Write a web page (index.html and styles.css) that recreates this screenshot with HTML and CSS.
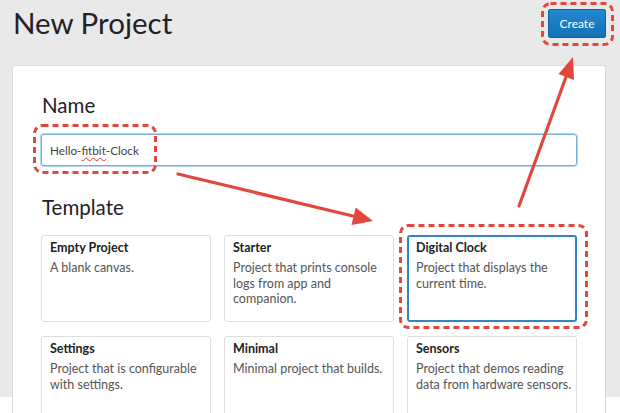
FILE: index.html
```html
<!DOCTYPE html>
<html lang="en">
<head>
<meta charset="utf-8">
<title>New Project</title>
<link rel="stylesheet" href="styles.css">
</head>
<body>
<div class="page">
  <header class="header">
    <h1 class="title">New Project</h1>
    <button class="create-btn" type="button">Create</button>
  </header>
  <main class="panel">
    <h2 class="label">Name</h2>
    <div class="name-input">Hello-<span class="misspelled">fitbit</span>-Clock</div>
    <h2 class="label template-label">Template</h2>
    <div class="templates">
      <div class="card">
        <div class="card-title">Empty Project</div>
        <div class="card-desc">A blank canvas.</div>
      </div>
      <div class="card">
        <div class="card-title">Starter</div>
        <div class="card-desc">Project that prints console logs from app and companion.</div>
      </div>
      <div class="card selected">
        <div class="card-title">Digital Clock</div>
        <div class="card-desc">Project that displays the current time.</div>
      </div>
      <div class="card">
        <div class="card-title">Settings</div>
        <div class="card-desc">Project that is configurable with settings.</div>
      </div>
      <div class="card">
        <div class="card-title">Minimal</div>
        <div class="card-desc">Minimal project that builds.</div>
      </div>
      <div class="card">
        <div class="card-title">Sensors</div>
        <div class="card-desc">Project that demos reading data from hardware sensors.</div>
      </div>
    </div>
  </main>
</div>
<svg class="annotations" width="620" height="413" viewBox="0 0 620 413" aria-hidden="true">
  <g fill="none" stroke="#e2473d" stroke-width="3" stroke-dasharray="6 4">
    <rect x="542.5" y="3.5" width="70" height="41" rx="8"/>
    <rect x="34.5" y="125.5" width="121" height="47" rx="8"/>
    <rect x="400.5" y="225.5" width="186" height="102" rx="8"/>
  </g>
  <g stroke="#e2473d" stroke-width="3.2" stroke-linecap="round">
    <line x1="178" y1="174" x2="355" y2="216.5"/>
    <line x1="519" y1="206" x2="566" y2="77"/>
  </g>
  <g fill="#e2473d">
    <polygon points="373,221 351.5,225 355.7,207.6"/>
    <polygon points="573,57 574,80 558.5,74"/>
  </g>
</svg>
</body>
</html>
```

FILE: styles.css
```css
html, body {
  margin: 0;
  padding: 0;
  background: #ffffff;
}

body {
  width: 620px;
  height: 413px;
  overflow: hidden;
  position: relative;
  font-family: "Lato", "Liberation Sans", sans-serif;
  color: #222;
}

.page {
  background: #e9e9e9;
  height: 397px;
  padding: 0 14px 0 12px;
  box-sizing: border-box;
}

.header {
  display: flex;
  justify-content: space-between;
  align-items: flex-start;
  height: 65px;
}

.title {
  margin: 5px 0 0 1px;
  font-size: 29.5px;
  font-weight: 400;
  line-height: 36px;
  color: #1f2229;
}

.create-btn {
  margin-top: 9px;
  width: 58px;
  height: 29px;
  padding: 0;
  border: 1px solid #11629f;
  border-radius: 2px;
  background: linear-gradient(#2388cf, #1470b4);
  color: #fff;
  font-family: "Lato", "Liberation Sans", sans-serif;
  font-size: 12px;
  line-height: 27px;
}

.panel {
  background: #fff;
  border: 1px solid #dcdcdc;
  border-bottom: none;
  border-radius: 3px 3px 0 0;
  padding: 28px 28px 0 28px;
  height: 360px;
}

.label {
  margin: 0 0 0 1px;
  font-size: 20.5px;
  font-weight: 400;
  line-height: 22px;
  color: #1f2229;
}

.name-input {
  margin-top: 18px;
  height: 32px;
  box-sizing: border-box;
  border: 1px solid #74acd9;
  box-shadow: 0 0 0 1px rgba(130, 185, 228, 0.55);
  border-radius: 3px;
  padding: 0 8px;
  font-size: 11.7px;
  line-height: 30px;
  color: #444;
}

.misspelled {
  text-decoration: underline wavy #e03030;
  text-decoration-thickness: 1px;
  text-underline-offset: 2px;
}

.template-label {
  margin-top: 30px;
}

.templates {
  margin-top: 17px;
  display: grid;
  grid-template-columns: repeat(3, 1fr);
  grid-auto-rows: 87px;
  gap: 14px 13px;
}

.card {
  border: 1px solid #dedede;
  border-radius: 3px;
  padding: 4px 2px 4px 8px;
}

.card.selected {
  border: 2px solid #3584c6;
  padding: 3px 1px 3px 7px;
}

.card-title {
  font-size: 12.5px;
  font-weight: 700;
  line-height: 15px;
  color: #222;
}

.card-desc {
  margin-top: 5px;
  font-size: 12.5px;
  line-height: 15.5px;
  color: #555;
}

.annotations {
  position: absolute;
  left: 0;
  top: 0;
  pointer-events: none;
}
```
